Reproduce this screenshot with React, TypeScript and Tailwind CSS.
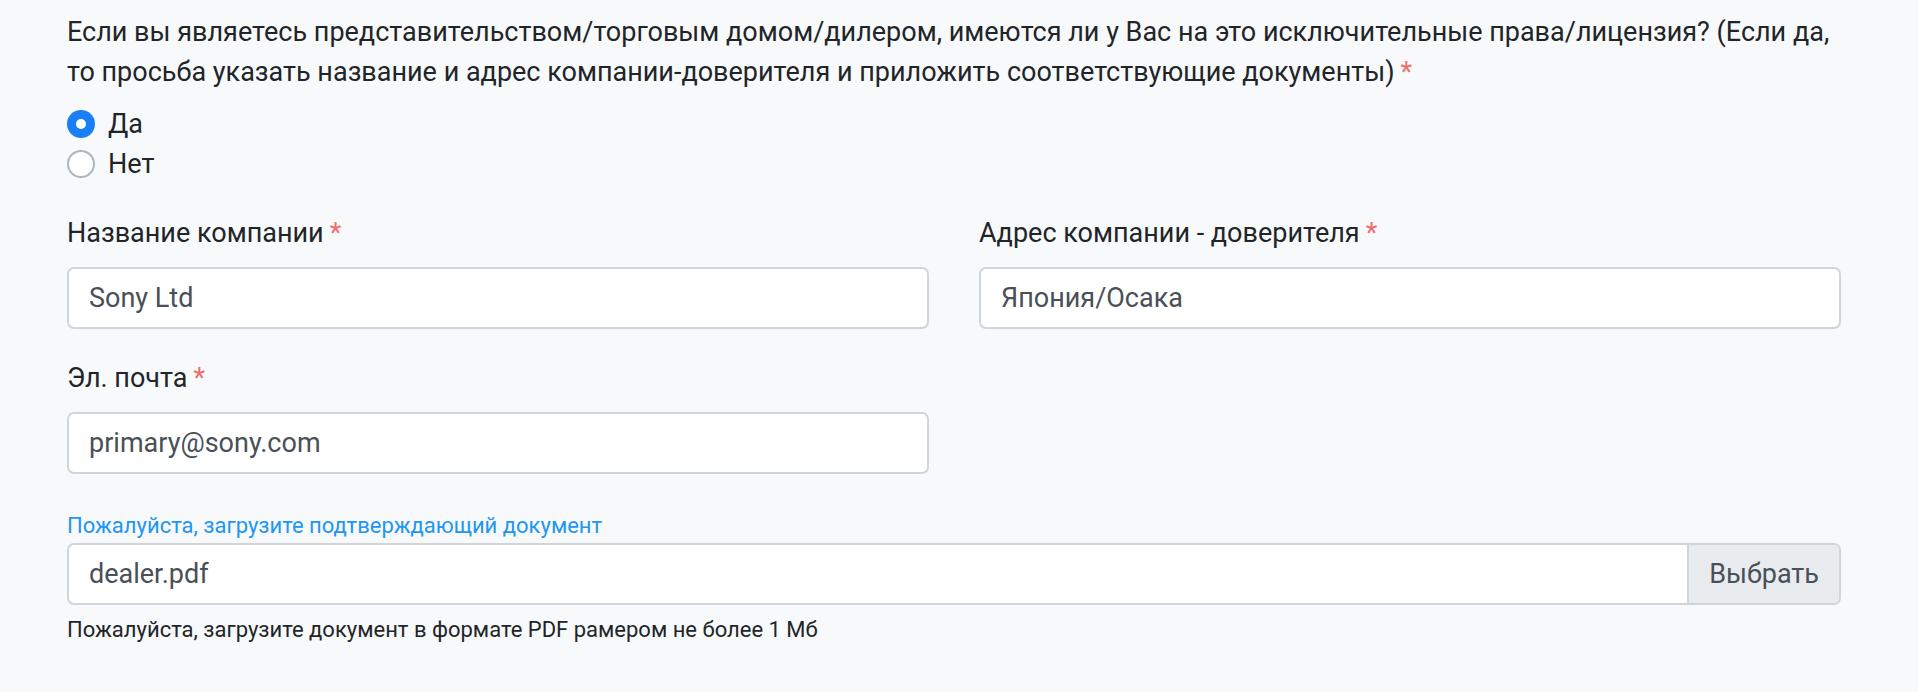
import React from "react";

function Req() {
  return <span className="text-[#f26b6b] ml-[6px]">*</span>;
}

function Radio({ checked, label }: { checked: boolean; label: string }) {
  return (
    <label className="flex items-center h-[40px]">
      {checked ? (
        <span className="w-[28px] h-[28px] rounded-full bg-[#1a7ef6] flex items-center justify-center">
          <span className="w-[10px] h-[10px] rounded-full bg-white" />
        </span>
      ) : (
        <span className="w-[28px] h-[28px] rounded-full bg-white border-2 border-[#adb5bd]" />
      )}
      <span className="ml-[13px] text-[27px] leading-[40px]">{label}</span>
    </label>
  );
}

function Field({ label, value }: { label: string; value: string }) {
  return (
    <div className="flex flex-col">
      <div className="text-[27px] leading-[40px] mb-[14px]">
        {label}
        <Req />
      </div>
      <div className="h-[62px] bg-white border-2 border-[#d0d5db] rounded-[7px] flex items-center px-[20px] text-[27px] text-[#495057]">
        {value}
      </div>
    </div>
  );
}

export default function App() {
  return (
    <div className="min-h-[692px] bg-[#f8f9fa] text-[#212529]" style={{ fontFamily: "Roboto, 'Noto Sans', sans-serif" }}>
      <div className="pl-[67px] pt-[12px] w-[1841px]">
        <div className="text-[27px] leading-[40px]">
          <div className="whitespace-nowrap">
            Если вы являетесь представительством/торговым домом/дилером, имеются ли у Вас на это исключительные права/лицензия? (Если да,
          </div>
          <div className="whitespace-nowrap">
            то просьба указать название и адрес компании-доверителя и приложить соответствующие документы)
            <Req />
          </div>
        </div>
        <div className="mt-[12px] flex flex-col">
          <Radio checked label="Да" />
          <Radio checked={false} label="Нет" />
        </div>
        <div className="mt-[29px] grid grid-cols-2 gap-x-[50px]">
          <Field label="Название компании" value="Sony Ltd" />
          <Field label="Адрес компании - доверителя" value="Япония/Осака" />
        </div>
        <div className="mt-[29px] grid grid-cols-2 gap-x-[50px]">
          <Field label="Эл. почта" value="primary@sony.com" />
        </div>
        <div className="mt-[36px] text-[22px] leading-[31px] text-[#2196f3]">
          Пожалуйста, загрузите подтверждающий документ
        </div>
        <div className="mt-[2px] h-[62px] flex bg-white border-2 border-[#d0d5db] rounded-[7px] overflow-hidden">
          <div className="flex-1 flex items-center px-[20px] text-[27px] text-[#495057]">dealer.pdf</div>
          <div className="flex items-center px-[20px] bg-[#e9ecef] border-l-2 border-[#d0d5db] text-[27px] text-[#495057]">
            Выбрать
          </div>
        </div>
        <div className="mt-[9px] text-[22px] leading-[31px] text-[#212529]">
          Пожалуйста, загрузите документ в формате PDF рамером не более 1 Мб
        </div>
      </div>
    </div>
  );
}
